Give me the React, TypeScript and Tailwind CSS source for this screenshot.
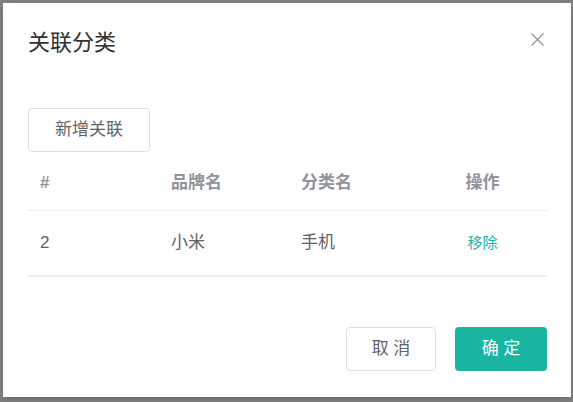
interface Row {
  id: number
  brand: string
  category: string
}

const rows: Row[] = [{ id: 2, brand: '小米', category: '手机' }]

const font = { fontFamily: '"Liberation Sans", "Noto Sans CJK SC", sans-serif' }

export default function App() {
  return (
    <div className="h-[402px] w-[573px] bg-[#7f7f7f] pt-[3px] pl-[3px]" style={font}>
      <div className="flex h-[394px] w-[568px] flex-col bg-white shadow-md">
        {/* Header */}
        <div className="flex items-start justify-between pt-[28px] pl-[25px] pr-[27px]">
          <span className="text-[22px] leading-[24px] text-[#303133]">关联分类</span>
          <svg className="mt-[2px]" width="13" height="13" viewBox="0 0 13 13">
            <path d="M0.5 0.5 L12.5 12.5 M12.5 0.5 L0.5 12.5" stroke="#909399" strokeWidth="1.2" fill="none" />
          </svg>
        </div>

        {/* Body */}
        <div className="px-[25px] pt-[53px]">
          <button className="h-[44px] w-[122px] rounded-[4px] border border-[#dcdfe6] bg-white text-[17px] text-[#606266]">
            新增关联
          </button>

          <div className="mt-[4px] w-[519px]">
            <div className="grid h-[55px] grid-cols-[131px_130px_129px_129px] items-center border-b border-[#ebeef5] text-[17px] font-bold text-[#909399]">
              <div className="pl-[12px]">#</div>
              <div className="pl-[12px]">品牌名</div>
              <div className="pl-[12px]">分类名</div>
              <div className="text-center">操作</div>
            </div>
            {rows.map(row => (
              <div
                key={row.id}
                className="grid h-[66px] grid-cols-[131px_130px_129px_129px] items-center border-b-2 border-[#ebeef5] text-[17px] text-[#606266]"
              >
                <div className="pl-[12px]">{row.id}</div>
                <div className="pl-[12px]">{row.brand}</div>
                <div className="pl-[12px]">{row.category}</div>
                <div className="text-center text-[15px] text-[#1ab5a1]">移除</div>
              </div>
            ))}
          </div>
        </div>

        {/* Footer */}
        <div className="mt-[50px] flex justify-end gap-[19px] pr-[24px]">
          <button className="h-[44px] w-[90px] rounded-[4px] border border-[#dcdfe6] bg-white text-[17px] text-[#606266]">
            取 消
          </button>
          <button className="h-[44px] w-[92px] rounded-[4px] bg-[#1ab5a1] text-[17px] text-white">
            确 定
          </button>
        </div>
      </div>
    </div>
  )
}
